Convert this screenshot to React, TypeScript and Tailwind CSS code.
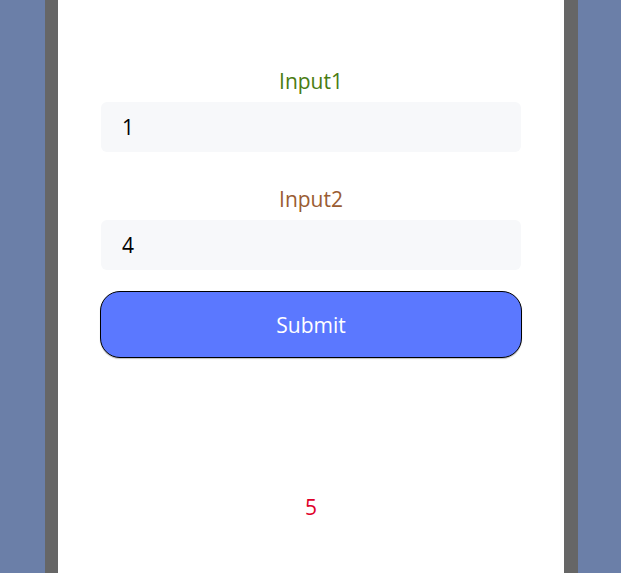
import React, { useState } from 'react';

const App: React.FC = () => {
  const [a, setA] = useState('1');
  const [b, setB] = useState('4');
  const [result, setResult] = useState<number | null>(5);

  const handleSubmit = () => {
    setResult(Number(a) + Number(b));
  };

  return (
    <div className="min-h-screen bg-[#6b7fa8] flex justify-center pl-[2px]" style={{ fontFamily: '"Open Sans", "Noto Sans", sans-serif' }}>
      <div className="w-[533px] min-h-screen bg-white border-l-[13px] border-r-[14px] border-[#666666] flex flex-col items-center px-[43px] pt-[67px]">
        <label className="text-[21px] leading-[28px] text-[#4a7c12] mb-[7px]">Input1</label>
        <input
          value={a}
          onChange={e => setA(e.target.value)}
          className="w-full h-[50px] rounded-md bg-[#f7f8fa] px-[21px] text-[21px] text-black outline-none"
        />

        <label className="text-[21px] leading-[28px] text-[#9a5c32] mt-[33px] mb-[7px]">Input2</label>
        <input
          value={b}
          onChange={e => setB(e.target.value)}
          className="w-full h-[50px] rounded-md bg-[#f7f8fa] px-[21px] text-[21px] text-black outline-none"
        />

        <button
          onClick={handleSubmit}
          className="mt-[21px] w-[422px] h-[67px] pt-[3px] rounded-[20px] border border-black bg-[#5b78ff] text-white text-[21px] shadow-[0_1px_1px_rgba(0,0,0,0.25)]"
        >
          Submit
        </button>

        <div className="mt-[134px] text-[21px] text-[#e0002a]">{result}</div>
      </div>
    </div>
  );
};

export default App;
